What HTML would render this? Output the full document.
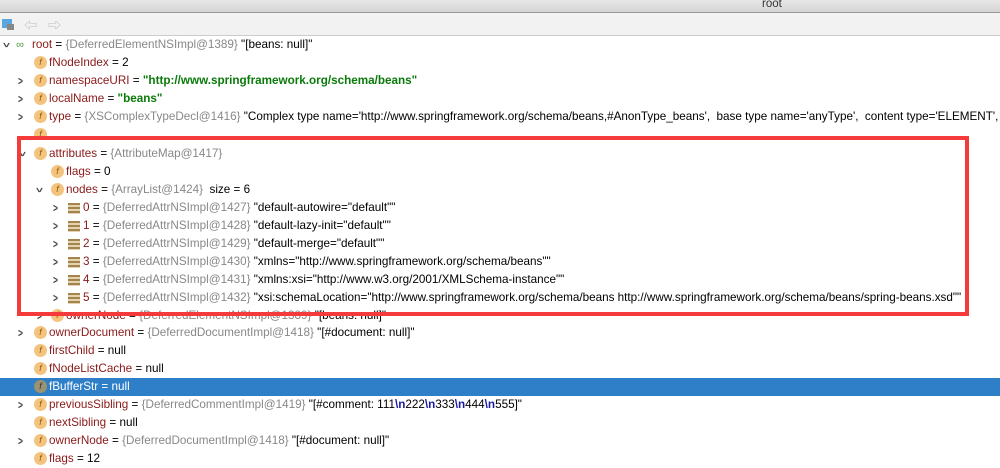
<!DOCTYPE html>
<html><head><meta charset="utf-8"><style>
body{margin:0;width:1000px;height:467px;overflow:hidden;background:#fff;font-family:"Liberation Sans","Noto Sans CJK SC",sans-serif;font-size:11.7px;position:relative}
.title{position:absolute;left:0;top:0;width:1000px;height:12px;background:linear-gradient(#e8e8e8,#d4d4d4);border-bottom:1px solid #999;overflow:hidden}
.title span{position:absolute;left:762px;top:-2px;font-size:11.5px;color:#333}
.tb{position:absolute;left:0;top:13px;width:1000px;height:22px;background:#f2f2f2;border-bottom:1px solid #ccc}
.row{position:absolute;left:0;width:1000px;height:18px;line-height:18px;white-space:nowrap;color:#000;overflow:hidden}
.ar{position:absolute;top:0;color:#444;font-size:12px;font-weight:bold;transform:scaleX(.7)}
.f{position:absolute;top:2px;width:13px;height:13px;border-radius:50%;background:#f4c47e;color:#8a5a10;font-size:9px;line-height:13px;text-align:center;font-style:italic}
.l{position:absolute;top:4px;width:12px;height:11px;background:repeating-linear-gradient(#a3834e 0 2px,#e5d3b0 2px 4px)}
.t{position:absolute;top:0}
.n{color:#8a1919}.g{color:#888}.s{color:#0a7a0a;font-weight:bold}.b{color:#1a1aa6;font-weight:bold}
.sel{background:#2f7fc8;color:#fff}
.sel .n{color:#fff}
.red{position:absolute;left:17px;top:136px;width:944px;height:172px;border:4px solid #f43a3a}
</style></head><body>
<div class="title"><span>root</span></div>
<div class="tb">
<svg style="position:absolute;left:2px;top:5px" width="12" height="12"><rect x="0" y="1" width="10" height="9" fill="#5aa7e0"/><rect x="5" y="6" width="7" height="6" fill="#888"/></svg>
<span style="position:absolute;left:24px;top:2px;color:#bbb;font-size:13px">⇦</span>
<span style="position:absolute;left:48px;top:2px;color:#bbb;font-size:13px">⇨</span>
</div>

<div class="row" style="top:36px"><span class="ar" style="left:3px;transform:rotate(90deg) scaleX(.7)">&gt;</span><span style="position:absolute;left:16px;top:0;color:#4a9a3a;font-style:italic;font-size:11px">∞</span><span class="t" style="left:32px"><span class="n">root</span> = <span class="g">{DeferredElementNSImpl@1389}</span> "[beans: null]"</span></div>
<div class="row" style="top:54px"><span class="f" style="left:34px">f</span><span class="t" style="left:49px"><span class="n">fNodeIndex</span> = 2</span></div>
<div class="row" style="top:72px"><span class="ar" style="left:17px">&gt;</span><span class="f" style="left:34px">f</span><span class="t" style="left:49px"><span class="n">namespaceURI</span> = <span class="s">"http://www.springframework.org/schema/beans"</span></span></div>
<div class="row" style="top:90px"><span class="ar" style="left:17px">&gt;</span><span class="f" style="left:34px">f</span><span class="t" style="left:49px"><span class="n">localName</span> = <span class="s">"beans"</span></span></div>
<div class="row" style="top:108px"><span class="ar" style="left:17px">&gt;</span><span class="f" style="left:34px">f</span><span class="t" style="left:49px"><span class="n">type</span> = <span class="g">{XSComplexTypeDecl@1416}</span> "Complex type name='http://www.springframework.org/schema/beans,#AnonType_beans',&nbsp; base type name='anyType',&nbsp; content type='ELEMENT',&nbsp; isAbstract</span></div>
<div class="row" style="top:126px;height:10px"><span class="f" style="left:34px">f</span></div>
<div class="row" style="top:145px"><span class="ar" style="left:19px;transform:rotate(90deg) scaleX(.7)">&gt;</span><span class="f" style="left:34px">f</span><span class="t" style="left:49px"><span class="n">attributes</span> = <span class="g">{AttributeMap@1417}</span></span></div>
<div class="row" style="top:163px"><span class="f" style="left:51px">f</span><span class="t" style="left:66px"><span class="n">flags</span> = 0</span></div>
<div class="row" style="top:181px"><span class="ar" style="left:36px;transform:rotate(90deg) scaleX(.7)">&gt;</span><span class="f" style="left:51px">f</span><span class="t" style="left:66px"><span class="n">nodes</span> = <span class="g">{ArrayList@1424}</span>&nbsp; size = 6</span></div>
<div class="row" style="top:199px"><span class="ar" style="left:52px">&gt;</span><span class="l" style="left:68px"></span><span class="t" style="left:83px"><span class="n">0</span> = <span class="g">{DeferredAttrNSImpl@1427}</span> "default-autowire="default""</span></div>
<div class="row" style="top:217px"><span class="ar" style="left:52px">&gt;</span><span class="l" style="left:68px"></span><span class="t" style="left:83px"><span class="n">1</span> = <span class="g">{DeferredAttrNSImpl@1428}</span> "default-lazy-init="default""</span></div>
<div class="row" style="top:235px"><span class="ar" style="left:52px">&gt;</span><span class="l" style="left:68px"></span><span class="t" style="left:83px"><span class="n">2</span> = <span class="g">{DeferredAttrNSImpl@1429}</span> "default-merge="default""</span></div>
<div class="row" style="top:253px"><span class="ar" style="left:52px">&gt;</span><span class="l" style="left:68px"></span><span class="t" style="left:83px"><span class="n">3</span> = <span class="g">{DeferredAttrNSImpl@1430}</span> "xmlns="http://www.springframework.org/schema/beans""</span></div>
<div class="row" style="top:271px"><span class="ar" style="left:52px">&gt;</span><span class="l" style="left:68px"></span><span class="t" style="left:83px"><span class="n">4</span> = <span class="g">{DeferredAttrNSImpl@1431}</span> "xmlns:xsi="http://www.w3.org/2001/XMLSchema-instance""</span></div>
<div class="row" style="top:289px"><span class="ar" style="left:52px">&gt;</span><span class="l" style="left:68px"></span><span class="t" style="left:83px"><span class="n">5</span> = <span class="g">{DeferredAttrNSImpl@1432}</span> "xsi:schemaLocation="http://www.springframework.org/schema/beans http://www.springframework.org/schema/beans/spring-beans.xsd""</span></div>
<div class="row" style="top:307px"><span class="ar" style="left:36px">&gt;</span><span class="f" style="left:51px">f</span><span class="t" style="left:66px"><span class="n">ownerNode</span> = <span class="g">{DeferredElementNSImpl@1389}</span> "[beans: null]"</span></div>
<div class="red"></div>
<div class="row" style="top:324px"><span class="ar" style="left:17px">&gt;</span><span class="f" style="left:34px">f</span><span class="t" style="left:49px"><span class="n">ownerDocument</span> = <span class="g">{DeferredDocumentImpl@1418}</span> "[#document: null]"</span></div>
<div class="row" style="top:342px"><span class="f" style="left:34px">f</span><span class="t" style="left:49px"><span class="n">firstChild</span> = null</span></div>
<div class="row" style="top:360px"><span class="f" style="left:34px">f</span><span class="t" style="left:49px"><span class="n">fNodeListCache</span> = null</span></div>
<div class="row sel" style="top:378px"><span class="f" style="left:34px;background:#9a9270;color:#333">f</span><span class="t" style="left:49px"><span class="n">fBufferStr</span> = null</span></div>
<div class="row" style="top:396px"><span class="ar" style="left:17px">&gt;</span><span class="f" style="left:34px">f</span><span class="t" style="left:49px"><span class="n">previousSibling</span> = <span class="g">{DeferredCommentImpl@1419}</span> "[#comment: 111<span class="b">\n</span>222<span class="b">\n</span>333<span class="b">\n</span>444<span class="b">\n</span>555]"</span></div>
<div class="row" style="top:414px"><span class="f" style="left:34px">f</span><span class="t" style="left:49px"><span class="n">nextSibling</span> = null</span></div>
<div class="row" style="top:432px"><span class="ar" style="left:17px">&gt;</span><span class="f" style="left:34px">f</span><span class="t" style="left:49px"><span class="n">ownerNode</span> = <span class="g">{DeferredDocumentImpl@1418}</span> "[#document: null]"</span></div>
<div class="row" style="top:450px"><span class="f" style="left:34px">f</span><span class="t" style="left:49px"><span class="n">flags</span> = 12</span></div>
</body></html>
